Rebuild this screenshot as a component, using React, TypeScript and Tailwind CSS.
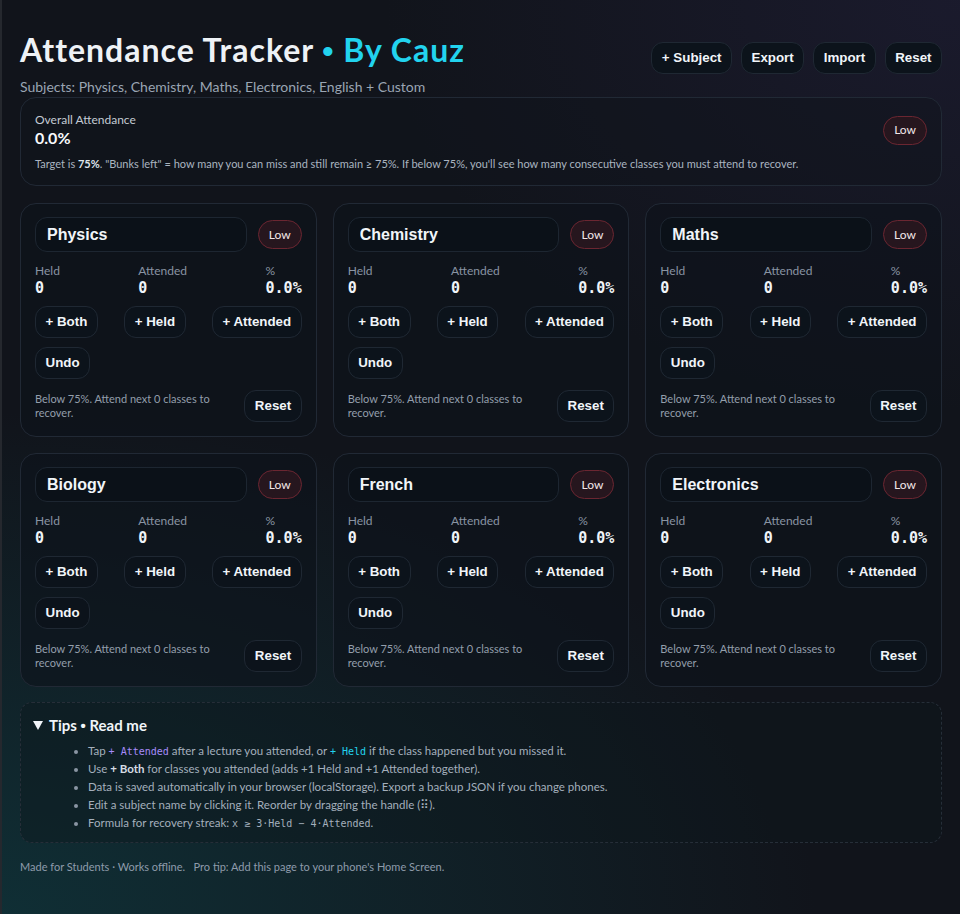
import React, { useState } from 'react';

interface Subject {
    id: string;
    name: string;
    held: number;
    attended: number;
}

const initialSubjects: Subject[] = [
    { id: 'phy', name: 'Physics', held: 0, attended: 0 },
    { id: 'chem', name: 'Chemistry', held: 0, attended: 0 },
    { id: 'math', name: 'Maths', held: 0, attended: 0 },
    { id: 'bio', name: 'Biology', held: 0, attended: 0 },
    { id: 'fr', name: 'French', held: 0, attended: 0 },
    { id: 'elec', name: 'Electronics', held: 0, attended: 0 },
];

const btnClass =
    "h-8 rounded-xl border border-[#1f2833] bg-[#0c131b] px-[9.5px] text-[13.33px] font-bold text-[#f1f5f9] font-['Liberation_Sans',Arial,sans-serif] hover:bg-[#131c27]";

const monoClass = "font-['DejaVu_Sans_Mono',monospace]";

const pct = (s: { held: number; attended: number }) => (s.held ? (s.attended / s.held) * 100 : 0);

const LowBadge = ({ low }: { low: boolean }) => (
    <span
        className={`flex h-[29px] items-center rounded-full border px-[10px] text-xs ${low
            ? 'border-[#6b2631] bg-[#26161e] text-[#f3e6e8]'
            : 'border-[#1f5a43] bg-[#122a22] text-[#dcfce7]'
            }`}
    >
        {low ? 'Low' : 'Safe'}
    </span>
);

const SubjectCard = ({
    subject,
    onChange,
}: {
    subject: Subject;
    onChange: (s: Subject) => void;
}) => {
    const [history, setHistory] = useState<Subject[]>([]);
    const p = pct(subject);
    const low = p < 75;

    const apply = (next: Subject) => {
        setHistory((h) => [...h, subject]);
        onChange(next);
    };

    const undo = () => {
        if (history.length === 0) return;
        const prev = history[history.length - 1];
        setHistory((h) => h.slice(0, -1));
        onChange(prev);
    };

    const need = Math.max(0, 3 * subject.held - 4 * subject.attended);
    const bunks = Math.max(0, Math.floor(subject.attended / 0.75 - subject.held));

    return (
        <div className="rounded-2xl border border-[#212935] bg-[#0e131a]/60 px-[14px] pb-[14px] pt-[13px]">
            <div className="flex items-center gap-[11px]">
                <input
                    value={subject.name}
                    onChange={(e) => onChange({ ...subject, name: e.target.value })}
                    className="h-[35px] min-w-0 flex-1 rounded-xl border border-[#1d2631] bg-[#0b1118] px-[11px] text-base font-bold text-[#f1f5f9] outline-none font-['Liberation_Sans',Arial,sans-serif]"
                />
                <LowBadge low={low} />
            </div>

            <div className="mt-[11px] flex justify-between">
                <div>
                    <div className="text-xs leading-4 text-[#8994a3]">Held</div>
                    <div className={`text-[15px] font-bold leading-[18px] text-[#f1f5f9] ${monoClass}`}>
                        {subject.held}
                    </div>
                </div>
                <div>
                    <div className="text-xs leading-4 text-[#8994a3]">Attended</div>
                    <div className={`text-[15px] font-bold leading-[18px] text-[#f1f5f9] ${monoClass}`}>
                        {subject.attended}
                    </div>
                </div>
                <div>
                    <div className="text-xs leading-4 text-[#8994a3]">%</div>
                    <div className={`text-[15px] font-bold leading-[18px] text-[#f1f5f9] ${monoClass}`}>
                        {p.toFixed(1)}%
                    </div>
                </div>
            </div>

            <div className="mt-[9px] flex justify-between">
                <button
                    className={btnClass}
                    onClick={() => apply({ ...subject, held: subject.held + 1, attended: subject.attended + 1 })}
                >
                    + Both
                </button>
                <button className={btnClass} onClick={() => apply({ ...subject, held: subject.held + 1 })}>
                    + Held
                </button>
                <button
                    className={btnClass}
                    onClick={() =>
                        apply({
                            ...subject,
                            attended: Math.min(subject.held, subject.attended + 1),
                        })
                    }
                >
                    + Attended
                </button>
            </div>
            <div className="mt-[9px] flex">
                <button className={btnClass} onClick={undo}>
                    Undo
                </button>
            </div>

            <div className="mt-[11px] flex items-center justify-between gap-3">
                <p className="max-w-[185px] text-[11px] leading-[14px] text-[#939eab]">
                    {low
                        ? `Below 75%. Attend next ${need} classes to recover.`
                        : `Bunks left: ${bunks}`}
                </p>
                <button
                    className={btnClass}
                    onClick={() => apply({ ...subject, held: 0, attended: 0 })}
                >
                    Reset
                </button>
            </div>
        </div>
    );
};

const App = () => {
    const [subjects, setSubjects] = useState<Subject[]>(initialSubjects);

    const totalHeld = subjects.reduce((a, s) => a + s.held, 0);
    const totalAttended = subjects.reduce((a, s) => a + s.attended, 0);
    const overall = pct({ held: totalHeld, attended: totalAttended });

    const updateSubject = (next: Subject) =>
        setSubjects((list) => list.map((s) => (s.id === next.id ? next : s)));

    const addSubject = () =>
        setSubjects((list) => [
            ...list,
            { id: `custom-${list.length}`, name: 'New Subject', held: 0, attended: 0 },
        ]);

    return (
        <div className="min-h-screen border-l-2 border-[#25282e] bg-[#11141b] bg-[radial-gradient(ellipse_85%_55%_at_0%_100%,rgba(15,58,64,0.7),transparent),radial-gradient(ellipse_60%_45%_at_100%_0%,rgba(38,34,66,0.45),transparent)] font-['Lato',sans-serif] text-[#e8edf3]">
            <div className="pb-10 pl-[18px] pr-[18px] pt-[28px]">
                {/* header */}
                <div className="flex items-start justify-between">
                    <h1 className="text-[32px] font-bold leading-[44px] tracking-[1px] text-[#eef2f6]">
                        Attendance Tracker{' '}
                        <span className="text-[#22d3ee]">
                            <span className="font-['Liberation_Sans',sans-serif]">•</span> By Cauz
                        </span>
                    </h1>
                    <div className="mt-[14px] flex gap-[9px]">
                        <button className={btnClass} onClick={addSubject}>
                            + Subject
                        </button>
                        <button className={btnClass}>Export</button>
                        <button className={btnClass}>Import</button>
                        <button className={btnClass} onClick={() => setSubjects(initialSubjects)}>
                            Reset
                        </button>
                    </div>
                </div>
                <p className="mt-[3px] text-sm leading-5 text-[#9aa5b3]">
                    Subjects: Physics, Chemistry, Maths, Electronics, English + Custom
                </p>

                {/* overall */}
                <div className="rounded-2xl border border-[#212935] bg-[#10141c]/50 px-[14px] pb-[13px] pt-[14px]">
                    <div className="flex items-center justify-between">
                        <div>
                            <div className="text-xs leading-4 text-[#c3cad3]">Overall Attendance</div>
                            <div className="text-base font-bold leading-5 text-[#f8fafc]">
                                {overall.toFixed(1)}%
                            </div>
                        </div>
                        <LowBadge low={overall < 75} />
                    </div>
                    <p className="mt-2 text-[11px] leading-4 text-[#aab4c0]">
                        Target is <b className="text-[#dfe5ec]">75%</b>. "Bunks left" = how many you can miss
                        and still remain ≥ 75%. If below 75%, you'll see how many consecutive classes you must
                        attend to recover.
                    </p>
                </div>

                {/* subjects */}
                <div className="mt-[17px] grid grid-cols-3 gap-4">
                    {subjects.map((s) => (
                        <SubjectCard key={s.id} subject={s} onChange={updateSubject} />
                    ))}
                </div>

                {/* tips */}
                <details
                    open
                    className="mt-[15px] rounded-xl border border-dashed border-[#262e38] bg-[#0c161c]/40 px-3 pb-[10px] pt-[10px]"
                >
                    <summary className="flex cursor-pointer list-none items-center gap-[6px] text-[15px] font-bold leading-6 text-[#f1f5f9]">
                        <svg width="10" height="9" viewBox="0 0 10 9" className="shrink-0">
                            <polygon points="0,0 10,0 5,9" fill="#f1f5f9" />
                        </svg>
                        <span>
                            Tips <span className="font-['Liberation_Sans',sans-serif]">•</span> Read me
                        </span>
                    </summary>
                    <ul className="mt-[4px] list-disc pl-[55px] text-[11.5px] leading-[18px] text-[#a4afbc] marker:text-[#8a95a3]">
                        <li>
                            Tap{' '}
                            <code className={`${monoClass} text-[10px] leading-none text-[#a78bfa]`}>+ Attended</code>{' '}
                            after a lecture you attended, or{' '}
                            <code className={`${monoClass} text-[10px] leading-none text-[#22d3ee]`}>+ Held</code> if
                            the class happened but you missed it.
                        </li>
                        <li>
                            Use <b className="text-[#d5dce4]">+ Both</b> for classes you attended (adds +1 Held
                            and +1 Attended together).
                        </li>
                        <li>
                            Data is saved automatically in your browser (localStorage). Export a backup JSON if
                            you change phones.
                        </li>
                        <li>Edit a subject name by clicking it. Reorder by dragging the handle (⠿).</li>
                        <li>
                            Formula for recovery streak:{' '}
                            <code className={`${monoClass} text-[10px] leading-none`}>x ≥ 3·Held − 4·Attended</code>.
                        </li>
                    </ul>
                </details>

                <p className="mt-[17px] whitespace-pre text-[11px] leading-[14px] text-[#8e9bab]">
                    Made for Students · Works offline.{'   '}Pro tip: Add this page to your phone's Home Screen.
                </p>
            </div>
        </div>
    );
};

export default App;
